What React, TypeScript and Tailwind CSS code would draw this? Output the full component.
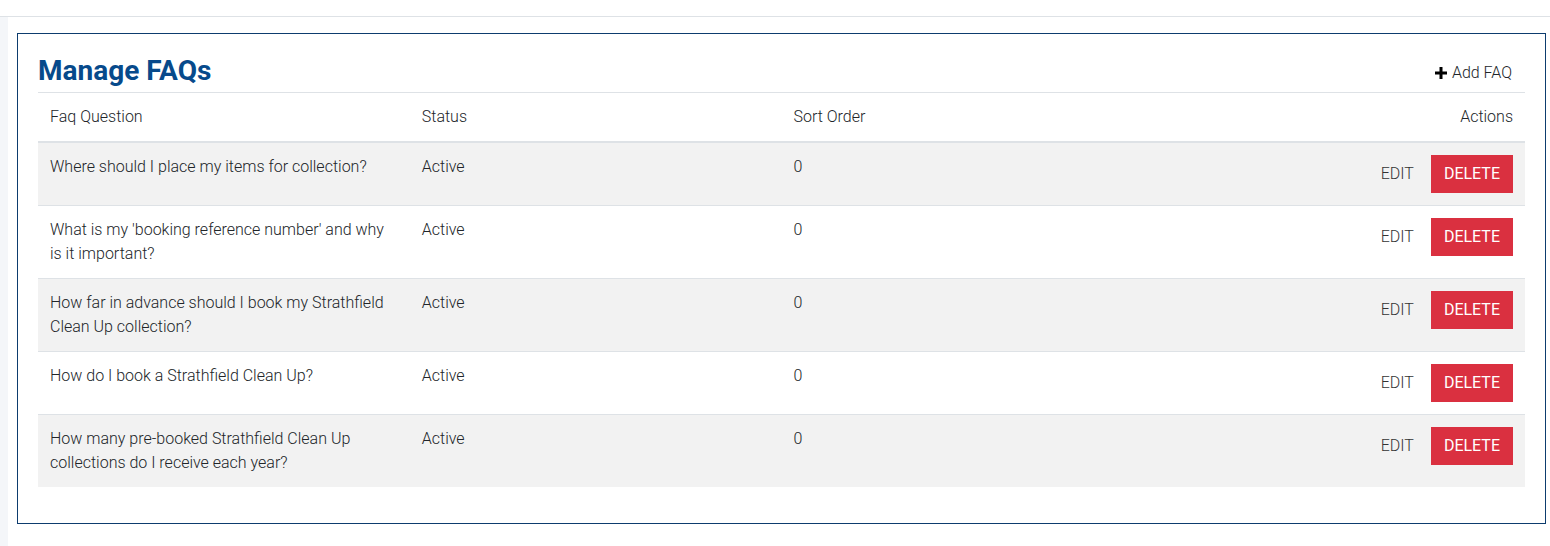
interface Faq {
  id: number;
  question: string;
  status: string;
  sortOrder: number;
}

const faqs: Faq[] = [
  { id: 1, question: 'Where should I place my items for collection?', status: 'Active', sortOrder: 0 },
  { id: 2, question: "What is my 'booking reference number' and why is it important?", status: 'Active', sortOrder: 0 },
  { id: 3, question: 'How far in advance should I book my Strathfield Clean Up collection?', status: 'Active', sortOrder: 0 },
  { id: 4, question: 'How do I book a Strathfield Clean Up?', status: 'Active', sortOrder: 0 },
  { id: 5, question: 'How many pre-booked Strathfield Clean Up collections do I receive each year?', status: 'Active', sortOrder: 0 },
];

export default function App() {
  return (
    <div className="min-h-screen bg-white font-['Roboto',sans-serif] text-[#212529]">
      {/* Top bar edge */}
      <div className="h-[17px] border-b border-[#dee2e6]" />

      <div className="flex">
        <div className="w-2 shrink-0 bg-[#f4f6f9] min-h-[529px]" />

        <div className="pl-[9px] pt-4 w-[1538px]">
          <div className="border border-[#0d3c6e] px-5 pb-9">
            {/* Header */}
            <div className="flex items-center justify-between h-[58px] pt-[16px]">
              <h1 className="text-[28px] font-bold text-[#074a8b]">Manage FAQs</h1>
              <a href="#" className="flex items-center gap-[5px] pr-[13px] pt-[4px] text-[16px] font-light text-[#212529]">
                <svg width="12" height="12" viewBox="0 0 12 12" className="text-black">
                  <path d="M4.5 0h3v4.5H12v3H7.5V12h-3V7.5H0v-3h4.5z" fill="currentColor" />
                </svg>
                Add FAQ
              </a>
            </div>

            {/* Table */}
            <table className="w-full table-fixed border-collapse text-[16px] font-light leading-6">
              <colgroup>
                <col className="w-1/4" />
                <col className="w-1/4" />
                <col className="w-1/4" />
                <col />
              </colgroup>
              <thead>
                <tr>
                  <th className="text-left font-light px-3 py-3 border-t border-b-2 border-[#dee2e6]">Faq Question</th>
                  <th className="text-left font-light px-3 py-3 border-t border-b-2 border-[#dee2e6]">Status</th>
                  <th className="text-left font-light px-3 py-3 border-t border-b-2 border-[#dee2e6]">Sort Order</th>
                  <th className="text-right font-light px-3 py-3 border-t border-b-2 border-[#dee2e6]">Actions</th>
                </tr>
              </thead>
              <tbody>
                {faqs.map((faq, i) => (
                  <tr key={faq.id} className={i % 2 === 0 ? 'bg-[#f2f2f2]' : 'bg-white'}>
                    <td className="align-top px-3 py-3 border-t border-[#dee2e6]">{faq.question}</td>
                    <td className="align-top px-3 py-3 border-t border-[#dee2e6]">{faq.status}</td>
                    <td className="align-top px-3 py-3 border-t border-[#dee2e6]">{faq.sortOrder}</td>
                    <td className="align-top px-3 py-3 border-t border-[#dee2e6]">
                      <div className="flex items-center justify-end gap-[17px]">
                        <a href="#" className="text-[#333] uppercase">Edit</a>
                        <button className="h-[38px] px-[13px] bg-[#da3040] text-white uppercase font-normal">Delete</button>
                      </div>
                    </td>
                  </tr>
                ))}
              </tbody>
            </table>
          </div>
        </div>
      </div>
    </div>
  );
}
